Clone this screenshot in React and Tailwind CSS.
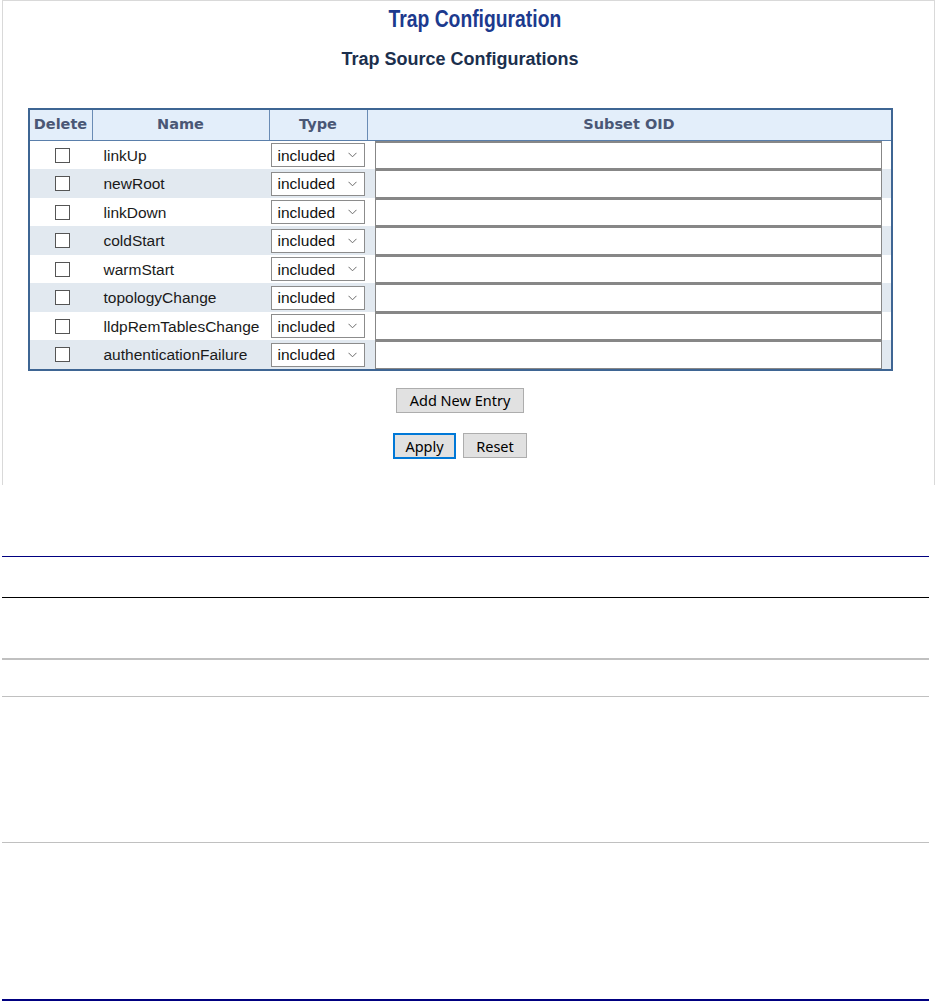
import React from 'react';

const traps = [
    'linkUp',
    'newRoot',
    'linkDown',
    'coldStart',
    'warmStart',
    'topologyChange',
    'lldpRemTablesChange',
    'authenticationFailure',
];

function Chevron() {
    return (
        <svg width="9" height="6" viewBox="0 0 9 6" fill="none">
            <path d="M0.5 0.8 L4.5 4.8 L8.5 0.8" stroke="#6b6b6b" strokeWidth="1" />
        </svg>
    );
}

function TrapRow({ name, shaded }) {
    return (
        <div className={`flex h-[28.5px] items-center ${shaded ? 'bg-[#e2e9f0]' : 'bg-white'}`}>
            {/* Delete */}
            <div className="w-[63px] flex justify-center pl-[3px]">
                <div className="w-[15px] h-[15px] border border-[#555] bg-white" />
            </div>
            {/* Name */}
            <div className="w-[177px] pl-[11px] text-[15.5px] text-[#1a1a1a] font-['Liberation_Sans',Arial,sans-serif] whitespace-nowrap">
                {name}
            </div>
            {/* Type */}
            <div className="w-[98px] pl-[1px]">
                <div className="w-[94px] h-[24px] border border-[#8c8c8c] bg-white flex items-center justify-between pl-[6px] pr-[7px] text-[15.5px] text-[#111] font-['Liberation_Sans',Arial,sans-serif]">
                    <span>included</span>
                    <Chevron />
                </div>
            </div>
            {/* Subset OID */}
            <div className="flex-1 h-full pl-[7px]">
                <div className="w-[507px] h-full border border-t-2 border-[#878787] bg-white" />
            </div>
        </div>
    );
}

export default function App() {
    return (
        <div className="w-[935px] min-h-[1001px] bg-white">
            {/* Config panel */}
            <div className="ml-[2px] w-[933px] h-[485px] border-t border-l border-r border-[#d9d9d9]">
                <div className="w-[914px] flex flex-col items-center">
                    <h1 className="mt-[5px] ml-[30px] h-[26px] leading-[26px] text-[23px] font-bold text-[#1c3a8e] font-['Liberation_Sans',Arial,sans-serif] scale-x-[0.84]">
                        Trap Configuration
                    </h1>
                    <h2 className="mt-[16.6px] h-[21px] leading-[21px] text-[18px] font-bold text-[#1b2f4d] font-['Liberation_Sans',Arial,sans-serif]">
                        Trap Source Configurations
                    </h2>

                    {/* Table */}
                    <div className="mt-[38.4px] w-[865px] border-2 border-[#3e6593]">
                        <div className="flex h-[31px] bg-[#e3eefa] border-b border-[#5a7fab] text-[14.5px] font-bold text-[#4a5775] font-['DejaVu_Sans',Verdana,sans-serif]">
                            <div className="w-[63px] border-r border-[#6a8cb5] flex items-center justify-center">Delete</div>
                            <div className="w-[177px] border-r border-[#6a8cb5] flex items-center justify-center">Name</div>
                            <div className="w-[98px] border-r border-[#6a8cb5] flex items-center justify-center">Type</div>
                            <div className="flex-1 flex items-center justify-center">Subset OID</div>
                        </div>
                        {traps.map((t, i) => (
                            <TrapRow key={t} name={t} shaded={i % 2 === 1} />
                        ))}
                    </div>

                    {/* Buttons */}
                    <button className="mt-[17px] w-[128px] h-[25px] bg-[#e1e1e1] border border-[#adadad] text-[14.5px] text-black font-['Noto_Sans',sans-serif] leading-none">
                        Add New Entry
                    </button>
                    <div className="mt-[20px] flex items-center gap-[7px]">
                        <button className="w-[63px] h-[26px] bg-[#e1e1e1] border-2 border-[#0078d7] text-[14.5px] text-black font-['Noto_Sans',sans-serif] leading-none">
                            Apply
                        </button>
                        <button className="w-[64px] h-[25px] bg-[#e1e1e1] border border-[#adadad] text-[14.5px] text-black font-['Noto_Sans',sans-serif] leading-none">
                            Reset
                        </button>
                    </div>
                </div>
            </div>

            {/* Document rules below */}
            <div className="ml-[2px] w-[927px] flex flex-col">
                <div className="mt-[71px] h-[1px] bg-[#000080]" />
                <div className="mt-[40px] h-[1px] bg-black" />
                <div className="mt-[60px] h-[2px] bg-[#c0c0c0]" />
                <div className="mt-[36px] h-[1px] bg-[#c0c0c0]" />
                <div className="mt-[145px] h-[1px] bg-[#c0c0c0]" />
                <div className="mt-[156px] h-[2px] bg-[#000080]" />
            </div>
        </div>
    );
}
